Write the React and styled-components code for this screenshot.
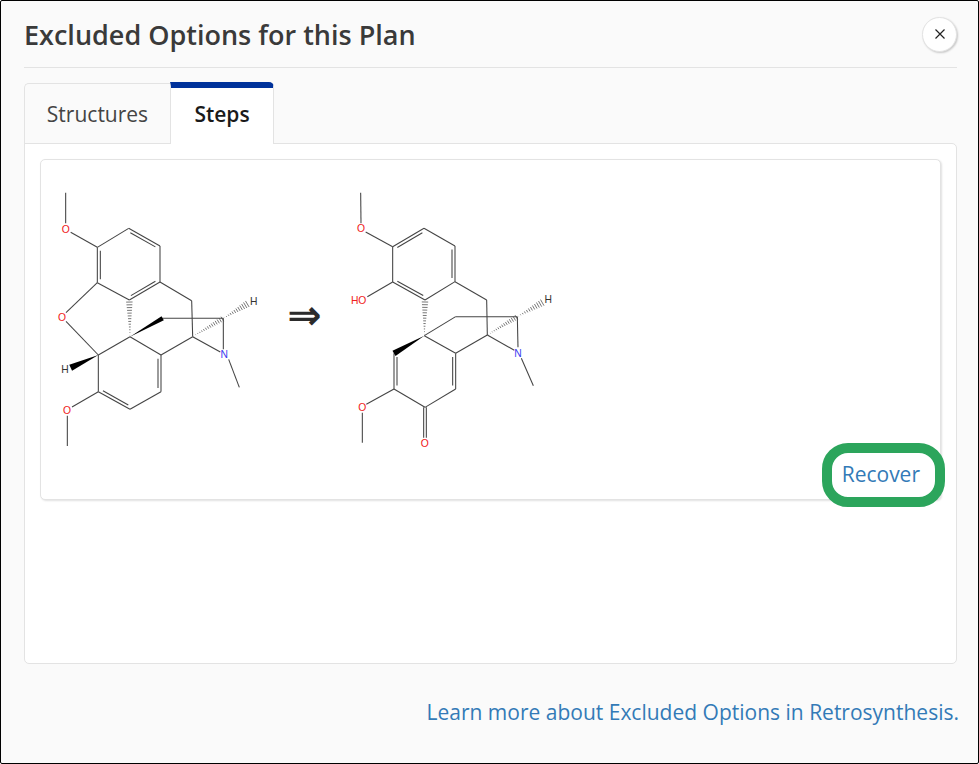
import React from "react";
import styled, { createGlobalStyle } from "styled-components";

const GlobalStyles = createGlobalStyle`
  html, body {
    margin: 0;
    padding: 0;
    background: #fff;
  }
  * {
    box-sizing: border-box;
  }
`;

// molecule coordinates are in 3x units: a 720 wide viewBox is drawn 240px wide
const Hashed = ({ from, to, width = 20, count = 9 }) => {
  const [x1, y1] = from;
  const [x2, y2] = to;
  const len = Math.hypot(x2 - x1, y2 - y1);
  const nx = -(y2 - y1) / len;
  const ny = (x2 - x1) / len;
  return Array.from({ length: count }, (_, i) => {
    const t = (i + 0.5) / count;
    const x = x1 + (x2 - x1) * t;
    const y = y1 + (y2 - y1) * t;
    const w = (width / 2) * t;
    return <HashLine key={i} x1={x - nx * w} y1={y - ny * w} x2={x + nx * w} y2={y + ny * w} />;
  });
};

const Wedge = ({ from, to, width = 20 }) => {
  const [x1, y1] = from;
  const [x2, y2] = to;
  const len = Math.hypot(x2 - x1, y2 - y1);
  const nx = (-(y2 - y1) / len) * (width / 2);
  const ny = ((x2 - x1) / len) * (width / 2);
  return (
    <WedgeShape
      points={`${x1},${y1} ${x2 + nx},${y2 + ny} ${x2 - nx},${y2 - ny}`}
    />
  );
};

const innerBond = ([x1, y1, x2, y2], [cx, cy]) => {
  const mx = (x1 + x2) / 2;
  const my = (y1 + y2) / 2;
  const len = Math.hypot(x2 - x1, y2 - y1);
  let nx = -(y2 - y1) / len;
  let ny = (x2 - x1) / len;
  if (nx * (cx - mx) + ny * (cy - my) < 0) {
    nx = -nx;
    ny = -ny;
  }
  const d = 9;
  const s = 0.1;
  return [
    x1 + (x2 - x1) * s + nx * d,
    y1 + (y2 - y1) * s + ny * d,
    x2 - (x2 - x1) * s + nx * d,
    y2 - (y2 - y1) * s + ny * d,
  ];
};

const Molecule = ({ viewBox, bonds, doubles, hashes, wedges, atoms }) => (
  <MoleculeSvg viewBox={viewBox}>
    <g>
      {bonds.map((b, i) => (
        <line key={i} x1={b[0]} y1={b[1]} x2={b[2]} y2={b[3]} />
      ))}
      {doubles.map(([b, center], i) => {
        const inner = innerBond(b, center);
        return (
          <React.Fragment key={i}>
            <line x1={b[0]} y1={b[1]} x2={b[2]} y2={b[3]} />
            <line x1={inner[0]} y1={inner[1]} x2={inner[2]} y2={inner[3]} />
          </React.Fragment>
        );
      })}
      {hashes.map((h, i) => (
        <Hashed key={i} {...h} />
      ))}
    </g>
    {wedges.map((w, i) => (
      <Wedge key={i} {...w} />
    ))}
    {atoms.map(([label, x, y, color], i) => (
      <AtomLabel key={i} x={x} y={y} $color={color}>
        {label}
      </AtomLabel>
    ))}
  </MoleculeSvg>
);

const RED = "#f02020";
const BLUE = "#3a3af0";
const DARK = "#333";

const topRing = [266, 283];
const lowRing = [270, 610];

const reactant = {
  viewBox: "3 0 720 870",
  bonds: [
    [77, 68, 77, 160],
    [92, 187, 172, 232],
    [172, 232, 266, 175],
    [360, 228, 360, 336],
    [268, 390, 172, 338],
    [172, 338, 78, 428],
    [78, 454, 175, 555],
    [175, 555, 270, 500],
    [365, 445, 550, 445],
    [360, 336, 455, 392],
    [455, 392, 458, 500],
    [270, 500, 363, 555],
    [363, 555, 458, 500],
    [550, 445, 550, 538],
    [458, 500, 541, 546],
    [566, 568, 598, 652],
    [175, 555, 175, 665],
    [270, 718, 363, 665],
    [175, 665, 96, 711],
    [82, 737, 82, 828],
  ],
  doubles: [
    [[172, 232, 172, 338], topRing],
    [[266, 175, 360, 228], topRing],
    [[360, 336, 268, 390], topRing],
    [[175, 665, 270, 718], lowRing],
    [[363, 665, 363, 555], lowRing],
  ],
  hashes: [
    { from: [270, 500], to: [268, 392], count: 13 },
    { from: [458, 500], to: [550, 445], count: 15, width: 16 },
    { from: [550, 445], to: [625, 400], count: 12, width: 22 },
  ],
  wedges: [
    { from: [270, 500], to: [368, 445], width: 14 },
    { from: [175, 555], to: [92, 593], width: 20 },
  ],
  atoms: [
    ["O", 77, 178, RED],
    ["O", 66, 442, RED],
    ["O", 81, 721, RED],
    ["N", 553, 553, BLUE],
    ["H", 641, 393, DARK],
    ["H", 75, 597, DARK],
  ],
};

const topRing2 = [432, 283];
const lowRing2 = [435, 605];

const product = {
  viewBox: "153 0 720 870",
  bonds: [
    [242, 68, 243, 160],
    [257, 186, 338, 230],
    [432, 175, 525, 228],
    [525, 335, 435, 390],
    [338, 230, 338, 336],
    [338, 336, 262, 380],
    [525, 335, 620, 390],
    [620, 390, 622, 495],
    [433, 497, 527, 440],
    [527, 440, 712, 440],
    [342, 657, 435, 712],
    [435, 712, 527, 657],
    [527, 550, 433, 497],
    [527, 550, 622, 495],
    [712, 440, 714, 532],
    [622, 495, 703, 541],
    [724, 565, 760, 647],
    [342, 657, 259, 703],
    [247, 728, 247, 818],
    [431, 712, 431, 803],
    [439, 712, 439, 803],
  ],
  doubles: [
    [[338, 230, 432, 175], topRing2],
    [[525, 228, 525, 335], topRing2],
    [[338, 336, 435, 390], topRing2],
    [[342, 550, 342, 657], lowRing2],
    [[527, 657, 527, 550], lowRing2],
  ],
  hashes: [
    { from: [433, 497], to: [435, 392], count: 13 },
    { from: [622, 495], to: [712, 440], count: 15, width: 16 },
    { from: [712, 440], to: [790, 396], count: 12, width: 22 },
  ],
  wedges: [{ from: [433, 497], to: [342, 550], width: 18 }],
  atoms: [
    ["O", 243, 176, RED],
    ["HO", 236, 392, RED],
    ["O", 247, 712, RED],
    ["O", 434, 820, RED],
    ["N", 714, 549, BLUE],
    ["H", 805, 389, DARK],
  ],
};

function App() {
  return (
    <>
      <GlobalStyles />
      <Window>
        <Header>
          <Title>Excluded Options for this Plan</Title>
          <CloseButton aria-label="Close">
            <svg width="10" height="10" viewBox="0 0 10 10">
              <path d="M0.5 0.5 L9.5 9.5 M9.5 0.5 L0.5 9.5" stroke="#222" strokeWidth="1.2" />
            </svg>
          </CloseButton>
        </Header>
        <TabList>
          <Tab>Structures</Tab>
          <Tab $active>Steps</Tab>
        </TabList>
        <Panel>
          <StepCard>
            <Reaction>
              <Molecule {...reactant} />
              <Arrow>⇒</Arrow>
              <Molecule {...product} />
            </Reaction>
            <CardActions>
              <RecoverLink href="#">Recover</RecoverLink>
            </CardActions>
          </StepCard>
        </Panel>
        <Footer>
          <FooterLink href="#">
            Learn more about Excluded Options in Retrosynthesis.
          </FooterLink>
        </Footer>
      </Window>
    </>
  );
}

export default App;

const Window = styled.div`
  width: 979px;
  height: 764px;
  border: 1px solid #000;
  border-radius: 2px;
  background: #fafafa;
  padding: 0 21px 0 23px;
  font-family: "Open Sans", "Noto Sans", sans-serif;
  display: flex;
  flex-direction: column;
`;

const Header = styled.header`
  height: 67px;
  flex-shrink: 0;
  border-bottom: 1px solid #e3e3e3;
  display: flex;
  align-items: center;
  justify-content: space-between;
`;

const Title = styled.h1`
  margin: 0;
  font-size: 27px;
  font-weight: 600;
  color: #3a3a3a;
`;

const CloseButton = styled.button`
  width: 35px;
  height: 35px;
  padding: 0;
  border: 1px solid #e3e3e3;
  border-radius: 50%;
  background: #fff;
  box-shadow: 1px 1px 2px rgba(0, 0, 0, 0.2);
  display: flex;
  align-items: center;
  justify-content: center;
`;

const TabList = styled.div`
  margin-top: 14px;
  margin-bottom: -1px;
  display: flex;
  align-items: flex-end;
  position: relative;
  z-index: 1;
`;

const Tab = styled.div`
  height: ${(p) => (p.$active ? "62px" : "61px")};
  width: ${(p) => (p.$active ? "104px" : "146px")};
  padding: ${(p) => (p.$active ? "0 0 5px" : "0")};
  display: flex;
  align-items: center;
  justify-content: center;
  font-size: 21px;
  font-weight: ${(p) => (p.$active ? 600 : 400)};
  color: ${(p) => (p.$active ? "#1a1a1a" : "#444")};
  background: ${(p) => (p.$active ? "#fff" : "#fafafa")};
  border: 1px solid #e3e3e3;
  border-bottom: ${(p) => (p.$active ? "none" : "1px solid #e3e3e3")};
  border-top: ${(p) => (p.$active ? "6px solid #00329b" : "1px solid #e3e3e3")};
  border-radius: ${(p) => (p.$active ? "0 5px 0 0" : "5px 0 0 0")};
  ${(p) => !p.$active && "border-right: none;"}
`;

const Panel = styled.section`
  height: 521px;
  flex-shrink: 0;
  padding: 15px;
  background: #fff;
  border: 1px solid #e3e3e3;
  border-radius: 0 5px 5px 5px;
`;

const StepCard = styled.article`
  height: 341px;
  padding-top: 10px;
  background: #fff;
  border: 1px solid #e3e3e3;
  border-radius: 5px;
  box-shadow: 1px 1px 2px rgba(0, 0, 0, 0.12);
  display: flex;
  flex-direction: column;
`;

const Reaction = styled.div`
  display: flex;
  align-items: center;
`;

const MoleculeSvg = styled.svg`
  width: 240px;
  height: 290px;
  flex-shrink: 0;

  line {
    stroke: #444;
    stroke-width: 3.2;
  }
`;

const HashLine = styled.line`
  && {
    stroke-width: 2.2;
  }
`;

const WedgeShape = styled.polygon`
  fill: #000;
`;

const AtomLabel = styled.text`
  font-family: "Liberation Sans", Arial, sans-serif;
  font-size: 31px;
  text-anchor: middle;
  dominant-baseline: central;
  fill: ${(p) => p.$color};
`;

const Arrow = styled.span`
  width: 50px;
  padding-right: 3px;
  text-align: center;
  font-family: "DejaVu Sans", sans-serif;
  font-size: 41px;
  font-weight: 700;
  line-height: 1;
  color: #2b2b2b;
`;

const CardActions = styled.div`
  display: flex;
  justify-content: flex-end;
  padding-right: 20px;
`;

const RecoverLink = styled.a`
  position: relative;
  font-size: 21px;
  line-height: 28px;
  color: #337ab7;
  text-decoration: none;

  &::after {
    content: "";
    position: absolute;
    top: -17px;
    right: -25px;
    bottom: -19px;
    left: -20px;
    border: 10px solid #2ca55c;
    border-radius: 26px;
  }
`;

const Footer = styled.footer`
  flex: 1;
  display: flex;
  align-items: center;
  justify-content: flex-end;
  padding-bottom: 4px;
  margin-right: -2px;
`;

const FooterLink = styled.a`
  font-size: 21px;
  color: #337ab7;
  text-decoration: none;
`;
